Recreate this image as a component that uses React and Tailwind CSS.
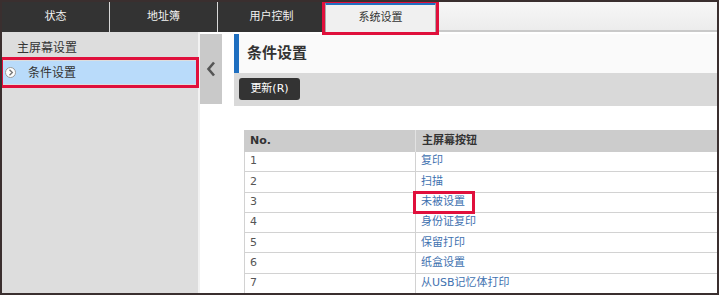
import React from 'react';

const FONT = '"DejaVu Sans", "Noto Sans CJK SC", sans-serif';

const TABS = [
  { label: '状态', w: 'w-[108px]' },
  { label: '地址簿', w: 'w-[108px]' },
  { label: '用户控制', w: 'w-[107px]' },
];

const ROWS = [
  { no: '1', label: '复印' },
  { no: '2', label: '扫描' },
  { no: '3', label: '未被设置', marked: true },
  { no: '4', label: '身份证复印' },
  { no: '5', label: '保留打印' },
  { no: '6', label: '纸盒设置' },
  { no: '7', label: '从USB记忆体打印' },
];

const App = () => {
  return (
    <div
      className="relative w-[719px] h-[295px] overflow-hidden bg-white border-[2px] border-[#3a2f2f] flex flex-col"
      style={{ fontFamily: FONT }}
    >
      {/* Tab bar */}
      <div className="h-[30px] flex shrink-0">
        {TABS.map((t, i) => (
          <div
            key={t.label}
            className={`${t.w} bg-[#333333] text-[#f2f2f2] text-[11px] flex items-center justify-center ${i < TABS.length - 1 ? 'border-r border-[#d8d8d8]' : ''}`}
          >
            {t.label}
          </div>
        ))}
        <div className="relative w-[111px] bg-[#f0f0f0] border-t-[3px] border-t-[#1f6fc0] border-x border-x-[#aaaaaa] text-[11px] text-[#333] flex items-center justify-center">
          系统设置
          <div className="absolute -left-[4px] -right-[4px] -top-[5px] -bottom-[3px] border-[3px] border-[#e0103c]" />
        </div>
        <div className="flex-1 bg-gradient-to-b from-[#f7f7f7] to-[#ececec] border-b-2 border-[#c9c9c9]" />
      </div>

      {/* Body */}
      <div className="flex-1 flex min-h-0">
        {/* Sidebar */}
        <div className="relative w-[198px] shrink-0 bg-[#dddddd] border-r-2 border-[#f2f2f2] pt-[6px]">
          <div className="h-[20px] pl-[15px] flex items-center text-[12px] text-[#333]">主屏幕设置</div>
          <div className="relative mt-[3px] h-[23px] bg-[#b9dbfa] flex items-center text-[12px] text-[#333]">
            <div className="w-[11px] h-[11px] ml-[3px] rounded-full bg-white border border-[#9a9a9a] flex items-center justify-center">
              <svg width="6" height="7" viewBox="0 0 6 7">
                <path d="M1.5 0.8 L4.3 3.5 L1.5 6.2" fill="none" stroke="#777" strokeWidth="1.4" />
              </svg>
            </div>
            <span className="ml-[12px]">条件设置</span>
            <div className="absolute -left-[2px] -right-[1px] -top-[4px] -bottom-[4px] border-[3px] border-[#e0103c]" />
          </div>
        </div>

        {/* Collapse handle */}
        <div className="w-[22px] shrink-0 pt-[2px]">
          <div className="h-[70px] bg-[#c9c9c9] flex items-center justify-center">
            <svg width="10" height="16" viewBox="0 0 10 16">
              <path d="M8 1.5 L2.5 8 L8 14.5" fill="none" stroke="#555" strokeWidth="2.6" />
            </svg>
          </div>
        </div>

        {/* Main */}
        <div className="flex-1 min-w-0 ml-[12px] pt-[2px] overflow-hidden">
          <div className="h-[39px] bg-[#fafafa] border-l-[5px] border-[#1f6fc0] flex items-center pl-[8px] text-[15px] font-bold text-[#333]">
            条件设置
          </div>
          <div className="h-[33px] bg-[#d9d9d9] pl-[5px] pt-[5px]">
            <div className="w-[61px] h-[22px] rounded-[3px] bg-[#333333] text-white text-[11px] flex items-center justify-center">
              更新(R)
            </div>
          </div>

          <div className="ml-[10px] mt-[24px] w-[600px] text-[11px]">
            <div className="h-[22px] bg-[#cccccc] flex items-center font-bold text-[#333]">
              <div className="w-[172px] pl-[6px] border-r border-[#e2e2e2] h-full flex items-center">No.</div>
              <div className="pl-[6px]">主屏幕按钮</div>
            </div>
            {ROWS.map(r => (
              <div key={r.no} className="h-[20.3px] flex border-b border-l border-[#d2d2d2] bg-white">
                <div className="w-[171px] pl-[5px] border-r border-[#d2d2d2] flex items-center text-[#555]">{r.no}</div>
                <div className="relative pl-[5px] flex items-center text-[#3f72b0]">
                  {r.label}
                  {r.marked && (
                    <div className="absolute -left-[3px] -top-[2px] w-[62px] h-[23px] border-[3px] border-[#e0103c]" />
                  )}
                </div>
              </div>
            ))}
          </div>
        </div>
      </div>
    </div>
  );
};

export default App;
